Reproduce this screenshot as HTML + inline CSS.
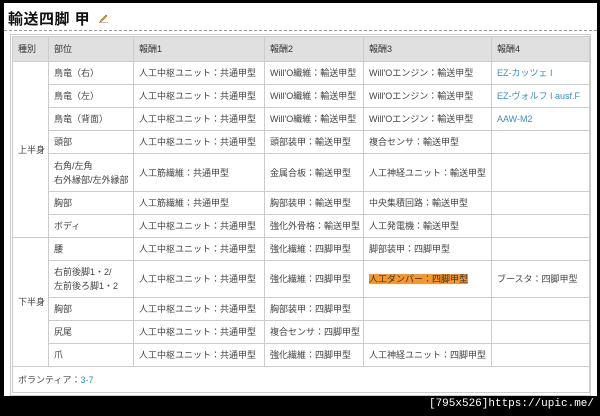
<!DOCTYPE html>
<html><head><meta charset="utf-8"><style>
*{margin:0;padding:0;box-sizing:border-box}
body{width:600px;height:416px;background:#000;position:relative;overflow:hidden;font-family:"Liberation Sans","Noto Sans CJK JP",sans-serif}
#pg{position:absolute;left:4px;top:3px;width:593px;height:393px;background:#fff}
h1{position:absolute;left:4px;top:5px;font-size:15px;font-weight:bold;color:#111;letter-spacing:0.5px}
.pen{position:absolute;left:95px;top:11px;width:9px;height:9px}
.dash{position:absolute;left:0;top:27px;width:593px;border-top:1px dashed #999}
table{position:absolute;left:8px;top:33px;border-collapse:collapse;font-size:9px;color:#444;width:577px;table-layout:fixed}
td,th{border:1px solid #ccc;padding:0 5px;text-align:left;font-weight:normal;white-space:nowrap;line-height:14px}
th{background:#e0e0e0;height:25px;color:#333}
td{height:23px}
a{color:#3a8ec2;text-decoration:none}
.hl{background:#f7962d;color:#333}
.outer{position:absolute;left:6px;top:31px;width:581px;height:362px;border:1px solid #ccc}
</style></head><body><div id="pg">
<h1>輸送四脚 甲</h1>
<svg class="pen" viewBox="0 0 9 9"><path d="M1 8 L2 6 L7 1 L8 2 L3 7 Z" fill="#e8b030" stroke="#a06010" stroke-width=".6"/><path d="M0 9 H9" stroke="#888" stroke-width="1"/></svg>
<div class="dash"></div>
<div class="outer"></div>
<table>
<colgroup><col style="width:36px"><col style="width:85px"><col style="width:131px"><col style="width:99px"><col style="width:128px"><col style="width:98px"></colgroup>
<tr><th>種別</th><th>部位</th><th>報酬1</th><th>報酬2</th><th>報酬3</th><th>報酬4</th></tr>
<tr><td rowspan="7" style="background:#fff">上半身</td><td>鳥竜（右）</td><td>人工中枢ユニット：共通甲型</td><td>Will'O纖維：輸送甲型</td><td>Will'Oエンジン：輸送甲型</td><td><a>EZ-カッツェ I</a></td></tr>
<tr><td>鳥竜（左）</td><td>人工中枢ユニット：共通甲型</td><td>Will'O纖維：輸送甲型</td><td>Will'Oエンジン：輸送甲型</td><td><a>EZ-ヴォルフ I ausf.F</a></td></tr>
<tr><td>鳥竜（背面）</td><td>人工中枢ユニット：共通甲型</td><td>Will'O纖維：輸送甲型</td><td>Will'Oエンジン：輸送甲型</td><td><a>AAW-M2</a></td></tr>
<tr><td>頭部</td><td>人工中枢ユニット：共通甲型</td><td>頭部装甲：輸送甲型</td><td>複合センサ：輸送甲型</td><td></td></tr>
<tr><td style="height:38px">右角/左角<br>右外縁部/左外縁部</td><td>人工筋繊維：共通甲型</td><td>金属合板：輸送甲型</td><td>人工神経ユニット：輸送甲型</td><td></td></tr>
<tr><td>胸部</td><td>人工筋繊維：共通甲型</td><td>胸部装甲：輸送甲型</td><td>中央集積回路：輸送甲型</td><td></td></tr>
<tr><td>ボディ</td><td>人工中枢ユニット：共通甲型</td><td>強化外骨格：輸送甲型</td><td>人工発電機：輸送甲型</td><td></td></tr>
<tr><td rowspan="5">下半身</td><td>腰</td><td>人工中枢ユニット：共通甲型</td><td>強化繊維：四脚甲型</td><td>脚部装甲：四脚甲型</td><td></td></tr>
<tr><td style="height:37px">右前後脚1・2/<br>左前後ろ脚1・2</td><td>人工中枢ユニット：共通甲型</td><td>強化繊維：四脚甲型</td><td><span class="hl">人工ダンパー：四脚甲型</span></td><td>ブースタ：四脚甲型</td></tr>
<tr><td>胸部</td><td>人工中枢ユニット：共通甲型</td><td>胸部装甲：四脚甲型</td><td></td><td></td></tr>
<tr><td>尻尾</td><td>人工中枢ユニット：共通甲型</td><td>複合センサ：四脚甲型</td><td></td><td></td></tr>
<tr><td>爪</td><td>人工中枢ユニット：共通甲型</td><td>強化繊維：四脚甲型</td><td>人工神経ユニット：四脚甲型</td><td></td></tr>
<tr><td colspan="6" style="height:26px">ボランティア：<a>3-7</a></td></tr>
</table>
</div>
<div style="position:absolute;right:6px;top:398px;color:#fff;font-size:11px;font-family:'Liberation Mono',monospace">[795x526]https://upic.me/</div>
</body></html>
